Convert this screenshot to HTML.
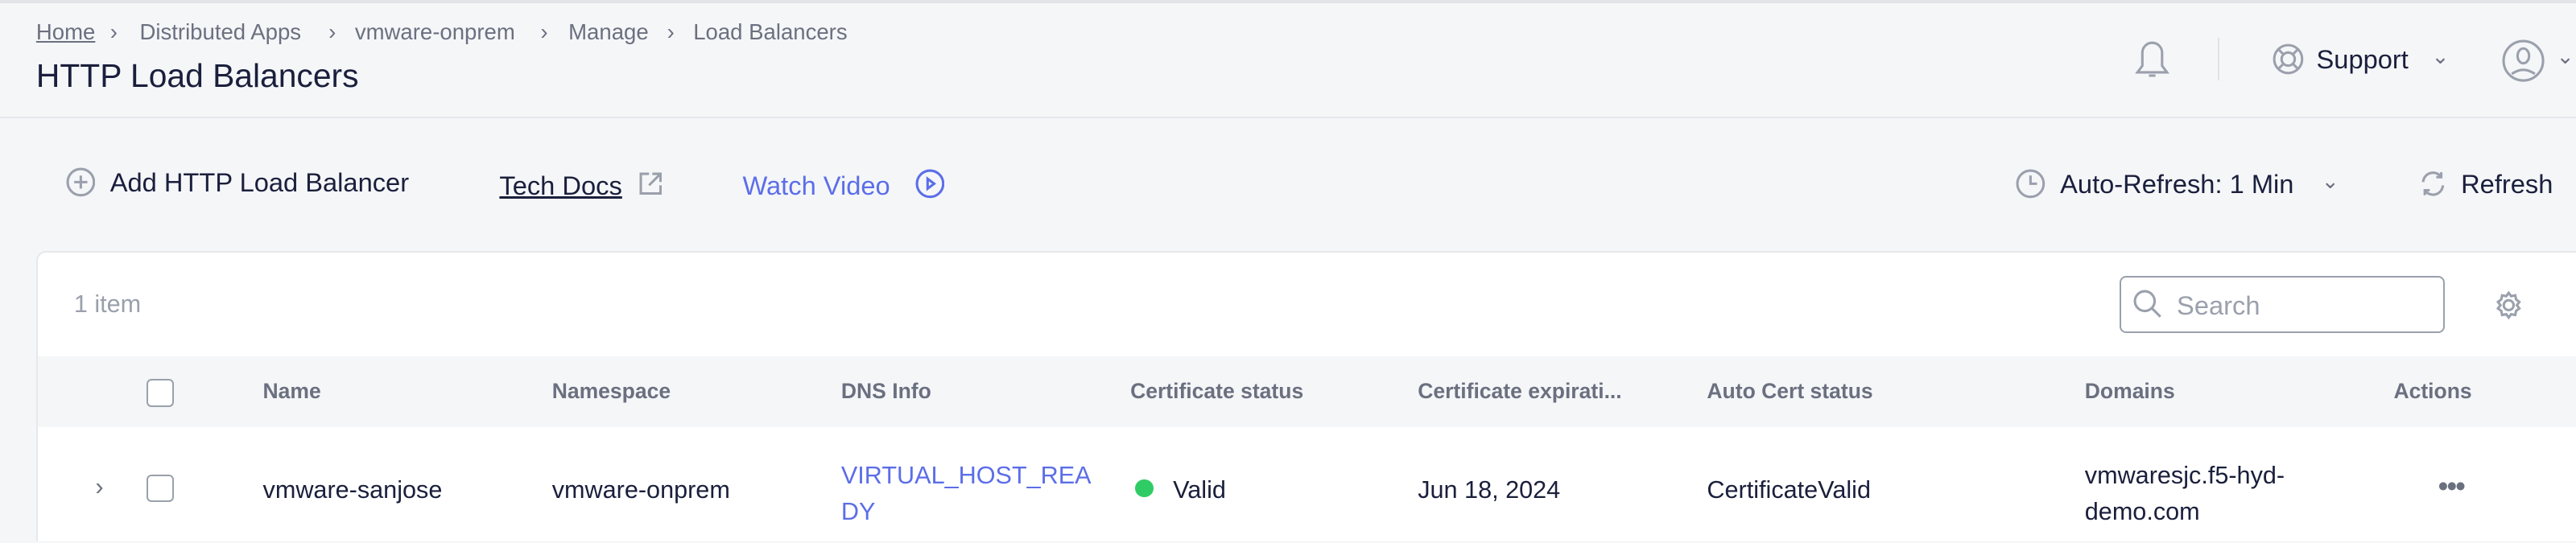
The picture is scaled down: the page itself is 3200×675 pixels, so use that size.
<!DOCTYPE html>
<html><head><meta charset="utf-8"><style>
html,body{margin:0;padding:0;width:3200px;height:675px;overflow:hidden;background:#f5f6f8}
#w{zoom:2.0408;width:1568px;height:330px;position:relative;font-family:"Liberation Sans",sans-serif;color:#1a1f3c;background:#f5f6f8;overflow:hidden}
.a{position:absolute;white-space:nowrap}
.g{color:#6b7080}
.b{position:absolute;top:12px;font-size:13.5px;color:#6b7080;white-space:nowrap}
svg{position:absolute;fill:none;stroke:#9aa0ac;stroke-width:1.5}
</style></head><body><div id="w">
<div class="a" style="left:0;top:0;width:1568px;height:2px;background:#e2e3e6"></div>
<span class="b" style="left:22px;text-decoration:underline">Home</span>
<span class="b" style="left:67px">›</span>
<span class="b" style="left:85px">Distributed Apps</span>
<span class="b" style="left:200px">›</span>
<span class="b" style="left:216px">vmware-onprem</span>
<span class="b" style="left:329px">›</span>
<span class="b" style="left:346px">Manage</span>
<span class="b" style="left:406px">›</span>
<span class="b" style="left:422px">Load Balancers</span>
<div class="a" style="left:22px;top:35px;font-size:20px">HTTP Load Balancers</div>
<svg style="left:1296px;top:21px" width="28" height="30" viewBox="0 0 28 30"><path d="M5 23h18l-3-4v-8a6 6 0 0 0-12 0v8z M12 25h4"/></svg>
<div class="a" style="left:1350px;top:23px;width:1px;height:26px;background:#e0e2e6"></div>
<svg style="left:1382px;top:25px" width="22" height="22" viewBox="0 0 22 22"><circle cx="11" cy="11" r="8.5"/><circle cx="11" cy="11" r="4"/><path d="M5 5l3 3M17 5l-3 3M5 17l3-3M17 17l-3-3"/></svg>
<div class="a" style="left:1410px;top:27px;font-size:16px">Support</div>
<div class="a g" style="left:1480px;top:27px;font-size:13px">⌄</div>
<svg style="left:1522px;top:23px" width="28" height="28" viewBox="0 0 28 28"><circle cx="14" cy="14" r="12"/><ellipse cx="14" cy="11" rx="3.5" ry="4.5"/><path d="M7 22q7-5 14 0"/></svg>
<div class="a g" style="left:1556px;top:27px;font-size:13px">⌄</div>
<div class="a" style="left:0;top:71px;width:1568px;height:1px;background:#e5e7eb"></div>
<svg style="left:40px;top:102px" width="18" height="18" viewBox="0 0 18 18"><circle cx="9" cy="9" r="8"/><path d="M9 5v8M5 9h8"/></svg>
<div class="a" style="left:67px;top:102px;font-size:16px">Add HTTP Load Balancer</div>
<div class="a" style="left:304px;top:104px;font-size:16px;text-decoration:underline">Tech Docs</div>
<svg style="left:389px;top:105px" width="14" height="14" viewBox="0 0 14 14"><path d="M6 1H1v12h12V8M8 1h5v5M13 1L6 8"/></svg>
<div class="a" style="left:452px;top:104px;font-size:16px;color:#5b6ee8">Watch Video</div>
<svg style="left:557px;top:103px;stroke:#5b6ee8" width="18" height="18" viewBox="0 0 18 18"><circle cx="9" cy="9" r="8"/><path d="M7.5 6v6l4-3z"/></svg>
<svg style="left:1227px;top:103px" width="18" height="18" viewBox="0 0 18 18"><circle cx="9" cy="9" r="8"/><path d="M9 4v5h4"/></svg>
<div class="a" style="left:1254px;top:103px;font-size:16px">Auto-Refresh: 1 Min</div>
<div class="a g" style="left:1413px;top:103px;font-size:13px">⌄</div>
<svg style="left:1472px;top:103px" width="18" height="18" viewBox="0 0 18 18"><path d="M3 8a6 6 0 0 1 11-3M14 2v3h-3M15 10a6 6 0 0 1-11 3M4 16v-3h3"/></svg>
<div class="a" style="left:1498px;top:103px;font-size:16px">Refresh</div>
<div class="a" style="left:22px;top:153px;width:1560px;height:176px;background:#fff;border:1px solid #e6e8ec;border-bottom:0;border-radius:6px 6px 0 0"></div>
<div class="a" style="left:45px;top:177px;font-size:15px;color:#9aa0ac">1 item</div>
<div class="a" style="left:1290px;top:168px;width:196px;height:33px;border:1px solid #9aa0ac;border-radius:4px;background:#fff"></div>
<svg style="left:1298px;top:176px" width="18" height="18" viewBox="0 0 18 18"><circle cx="7.5" cy="7.5" r="6"/><path d="M12 12l5 5"/></svg>
<div class="a" style="left:1325px;top:177px;font-size:16px;color:#9aa0ac">Search</div>
<svg style="left:1518px;top:177px" width="18" height="18" viewBox="0 0 18 18"><circle cx="9" cy="9" r="3"/><path d="M9 1.5l1.5 2 2.5-.5.5 2.5 2 1.5-1.5 2 1.5 2-2 1.5-.5 2.5-2.5-.5L9 16.5l-1.5-2-2.5.5-.5-2.5-2-1.5 1.5-2-1.5-2 2-1.5.5-2.5 2.5.5z"/></svg>
<div class="a" style="left:23px;top:217px;width:1560px;height:43px;background:#f5f6f8"></div>
<div class="a" style="left:89px;top:231px;width:15px;height:15px;border:1.3px solid #9aa0ac;border-radius:3px;background:#fff"></div>
<div class="a g" style="top:231px;left:160px;font-size:13px;font-weight:bold">Name</div>
<div class="a g" style="top:231px;left:336px;font-size:13px;font-weight:bold">Namespace</div>
<div class="a g" style="top:231px;left:512px;font-size:13px;font-weight:bold">DNS Info</div>
<div class="a g" style="top:231px;left:688px;font-size:13px;font-weight:bold">Certificate status</div>
<div class="a g" style="top:231px;left:863px;font-size:13px;font-weight:bold">Certificate expirati...</div>
<div class="a g" style="top:231px;left:1039px;font-size:13px;font-weight:bold">Auto Cert status</div>
<div class="a g" style="top:231px;left:1269px;font-size:13px;font-weight:bold">Domains</div>
<div class="a g" style="top:231px;left:1457px;font-size:13px;font-weight:bold">Actions</div>
<div class="a g" style="left:58px;top:288px;font-size:15px">›</div>
<div class="a" style="left:89px;top:289px;width:15px;height:15px;border:1.3px solid #9aa0ac;border-radius:3px;background:#fff"></div>
<div class="a" style="top:290px;left:160px;font-size:15px">vmware-sanjose</div>
<div class="a" style="top:290px;left:336px;font-size:15px">vmware-onprem</div>
<div class="a" style="top:279px;left:512px;font-size:15px;color:#5b6ee8;line-height:22px">VIRTUAL_HOST_REA<br>DY</div>
<div class="a" style="top:292px;left:691px;width:11px;height:11px;border-radius:50%;background:#2fcc66"></div>
<div class="a" style="top:290px;left:714px;font-size:15px">Valid</div>
<div class="a" style="top:290px;left:863px;font-size:15px">Jun 18, 2024</div>
<div class="a" style="top:290px;left:1039px;font-size:15px">CertificateValid</div>
<div class="a" style="top:279px;left:1269px;font-size:15px;line-height:22px">vmwaresjc.f5-hyd-<br>demo.com</div>
<div class="a g" style="top:286px;left:1484px;font-size:18px;letter-spacing:-1px">•••</div>
</div></body></html>
